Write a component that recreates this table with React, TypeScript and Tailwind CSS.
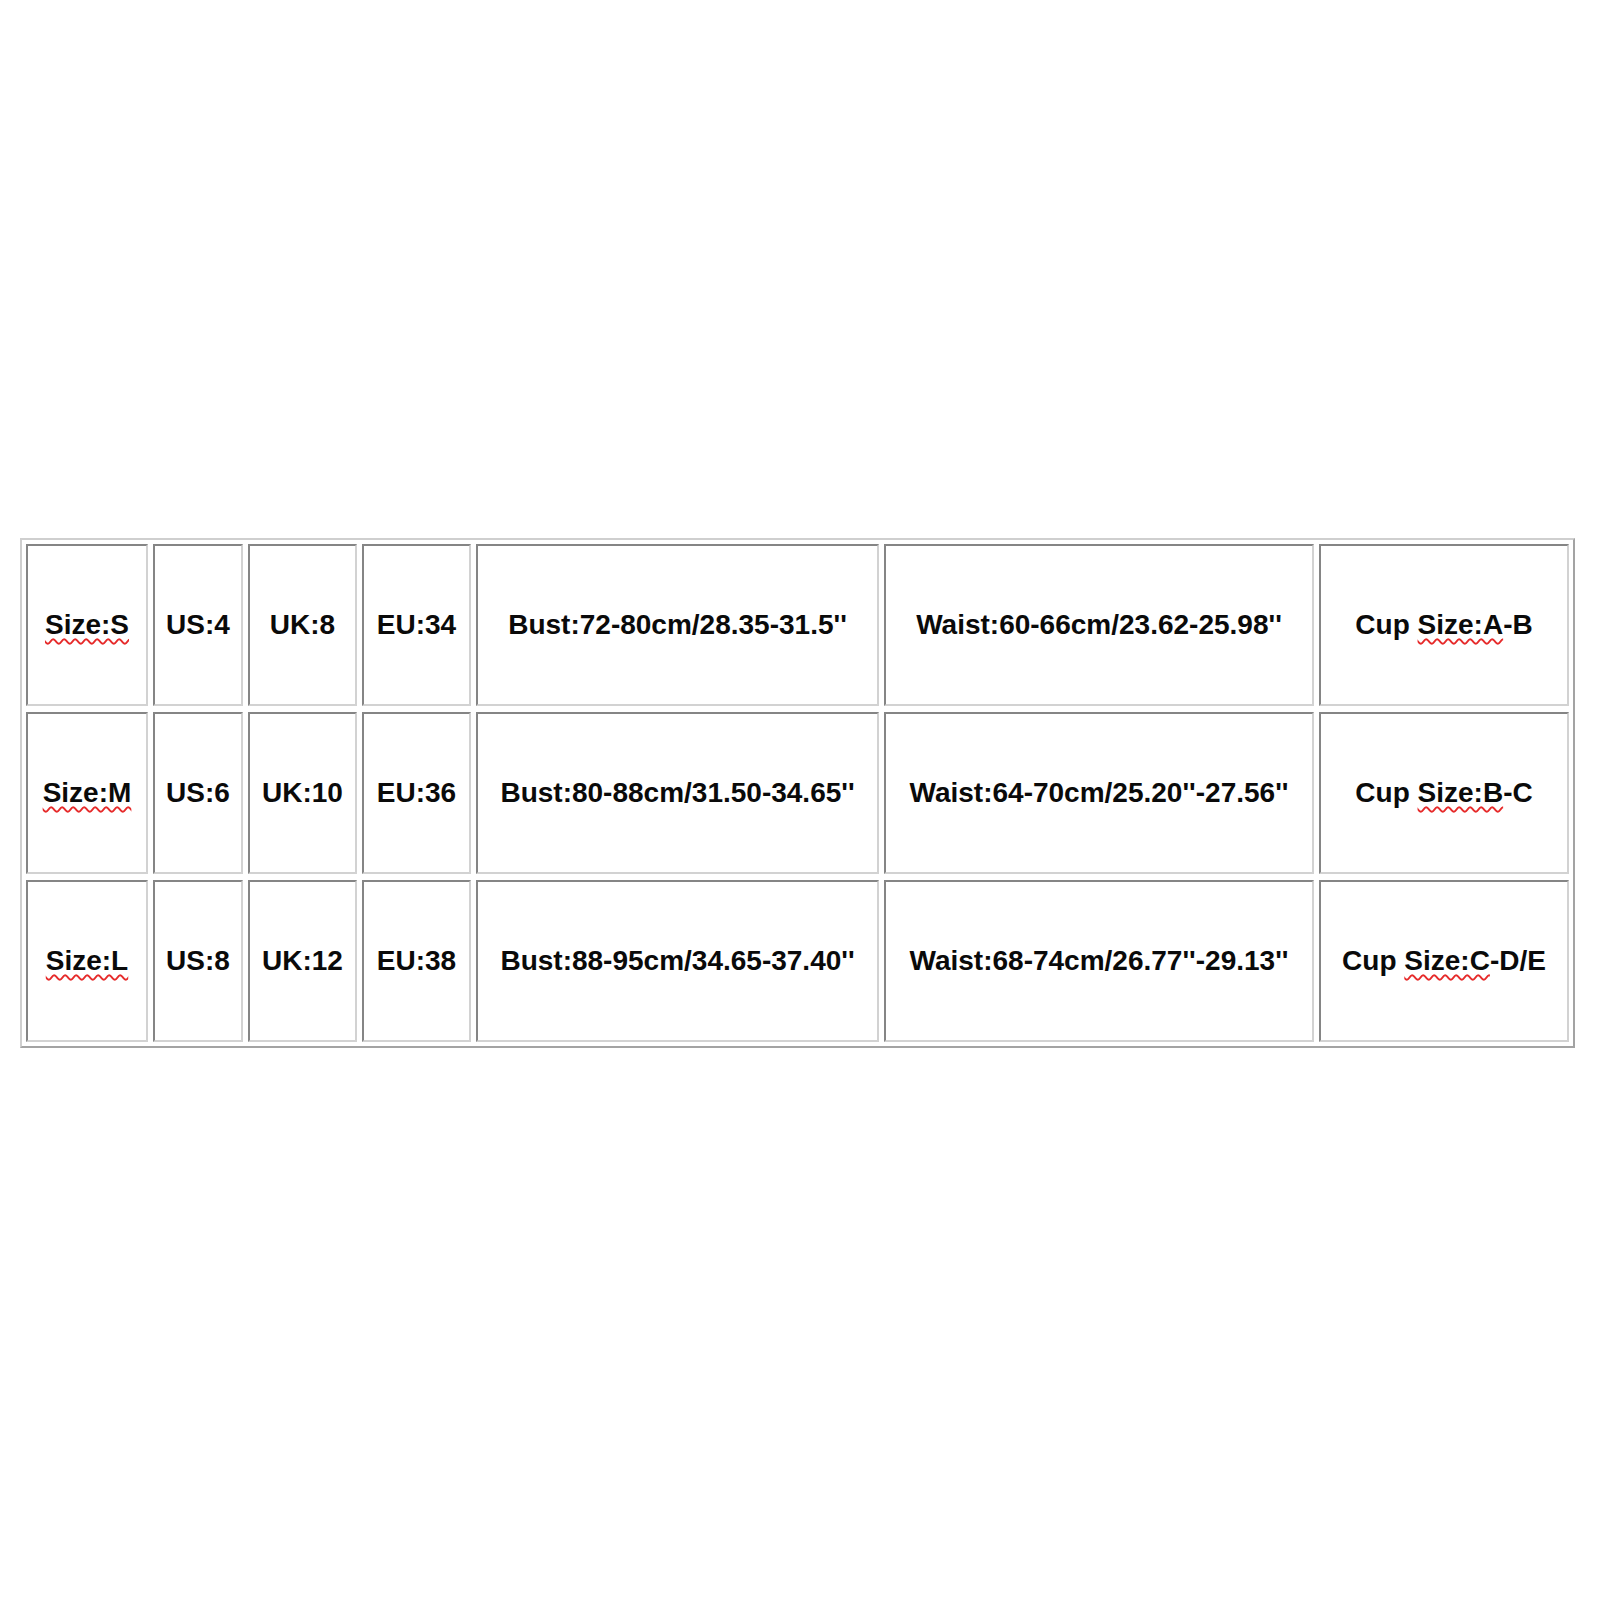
const widths = ["w-[122px]", "w-[90px]", "w-[109px]", "w-[109px]", "w-[403px]", "w-[430px]", "w-[250px]"]

type Cell = { pre?: string; squiggle?: string; post?: string }

const rows: Cell[][] = [
  [
    { squiggle: "Size:S" },
    { pre: "US:4" },
    { pre: "UK:8" },
    { pre: "EU:34" },
    { pre: "Bust:72-80cm/28.35-31.5''" },
    { pre: "Waist:60-66cm/23.62-25.98''" },
    { pre: "Cup ", squiggle: "Size:A", post: "-B" },
  ],
  [
    { squiggle: "Size:M" },
    { pre: "US:6" },
    { pre: "UK:10" },
    { pre: "EU:36" },
    { pre: "Bust:80-88cm/31.50-34.65''" },
    { pre: "Waist:64-70cm/25.20''-27.56''" },
    { pre: "Cup ", squiggle: "Size:B", post: "-C" },
  ],
  [
    { squiggle: "Size:L" },
    { pre: "US:8" },
    { pre: "UK:12" },
    { pre: "EU:38" },
    { pre: "Bust:88-95cm/34.65-37.40''" },
    { pre: "Waist:68-74cm/26.77''-29.13''" },
    { pre: "Cup ", squiggle: "Size:C", post: "-D/E" },
  ],
]

export default function App() {
  return (
    <div className="min-h-[1600px] bg-white pt-[538px] pl-[20px] font-['Liberation_Sans',Arial,sans-serif]">
      {/* size chart table */}
      <div className="inline-flex flex-col gap-y-[6px] p-[4px] border-2 border-t-[#cfcfcf] border-l-[#cfcfcf] border-r-[#a3a3a3] border-b-[#a3a3a3]">
        {rows.map((row, r) => (
          <div key={r} className="flex gap-x-[5px]">
            {row.map((cell, c) => (
              <div
                key={c}
                className={`${widths[c]} h-[162px] flex items-center justify-center border-2 border-t-[#858585] border-l-[#858585] border-r-[#d2d2d2] border-b-[#d2d2d2] text-[28px] font-bold text-[#0a0a0a] whitespace-nowrap`}
              >
                <span>
                  {cell.pre}
                  {cell.squiggle && (
                    <span className="underline decoration-wavy decoration-[#e62a2a] decoration-[1.5px] underline-offset-[4px]">
                      {cell.squiggle}
                    </span>
                  )}
                  {cell.post}
                </span>
              </div>
            ))}
          </div>
        ))}
      </div>
    </div>
  )
}
